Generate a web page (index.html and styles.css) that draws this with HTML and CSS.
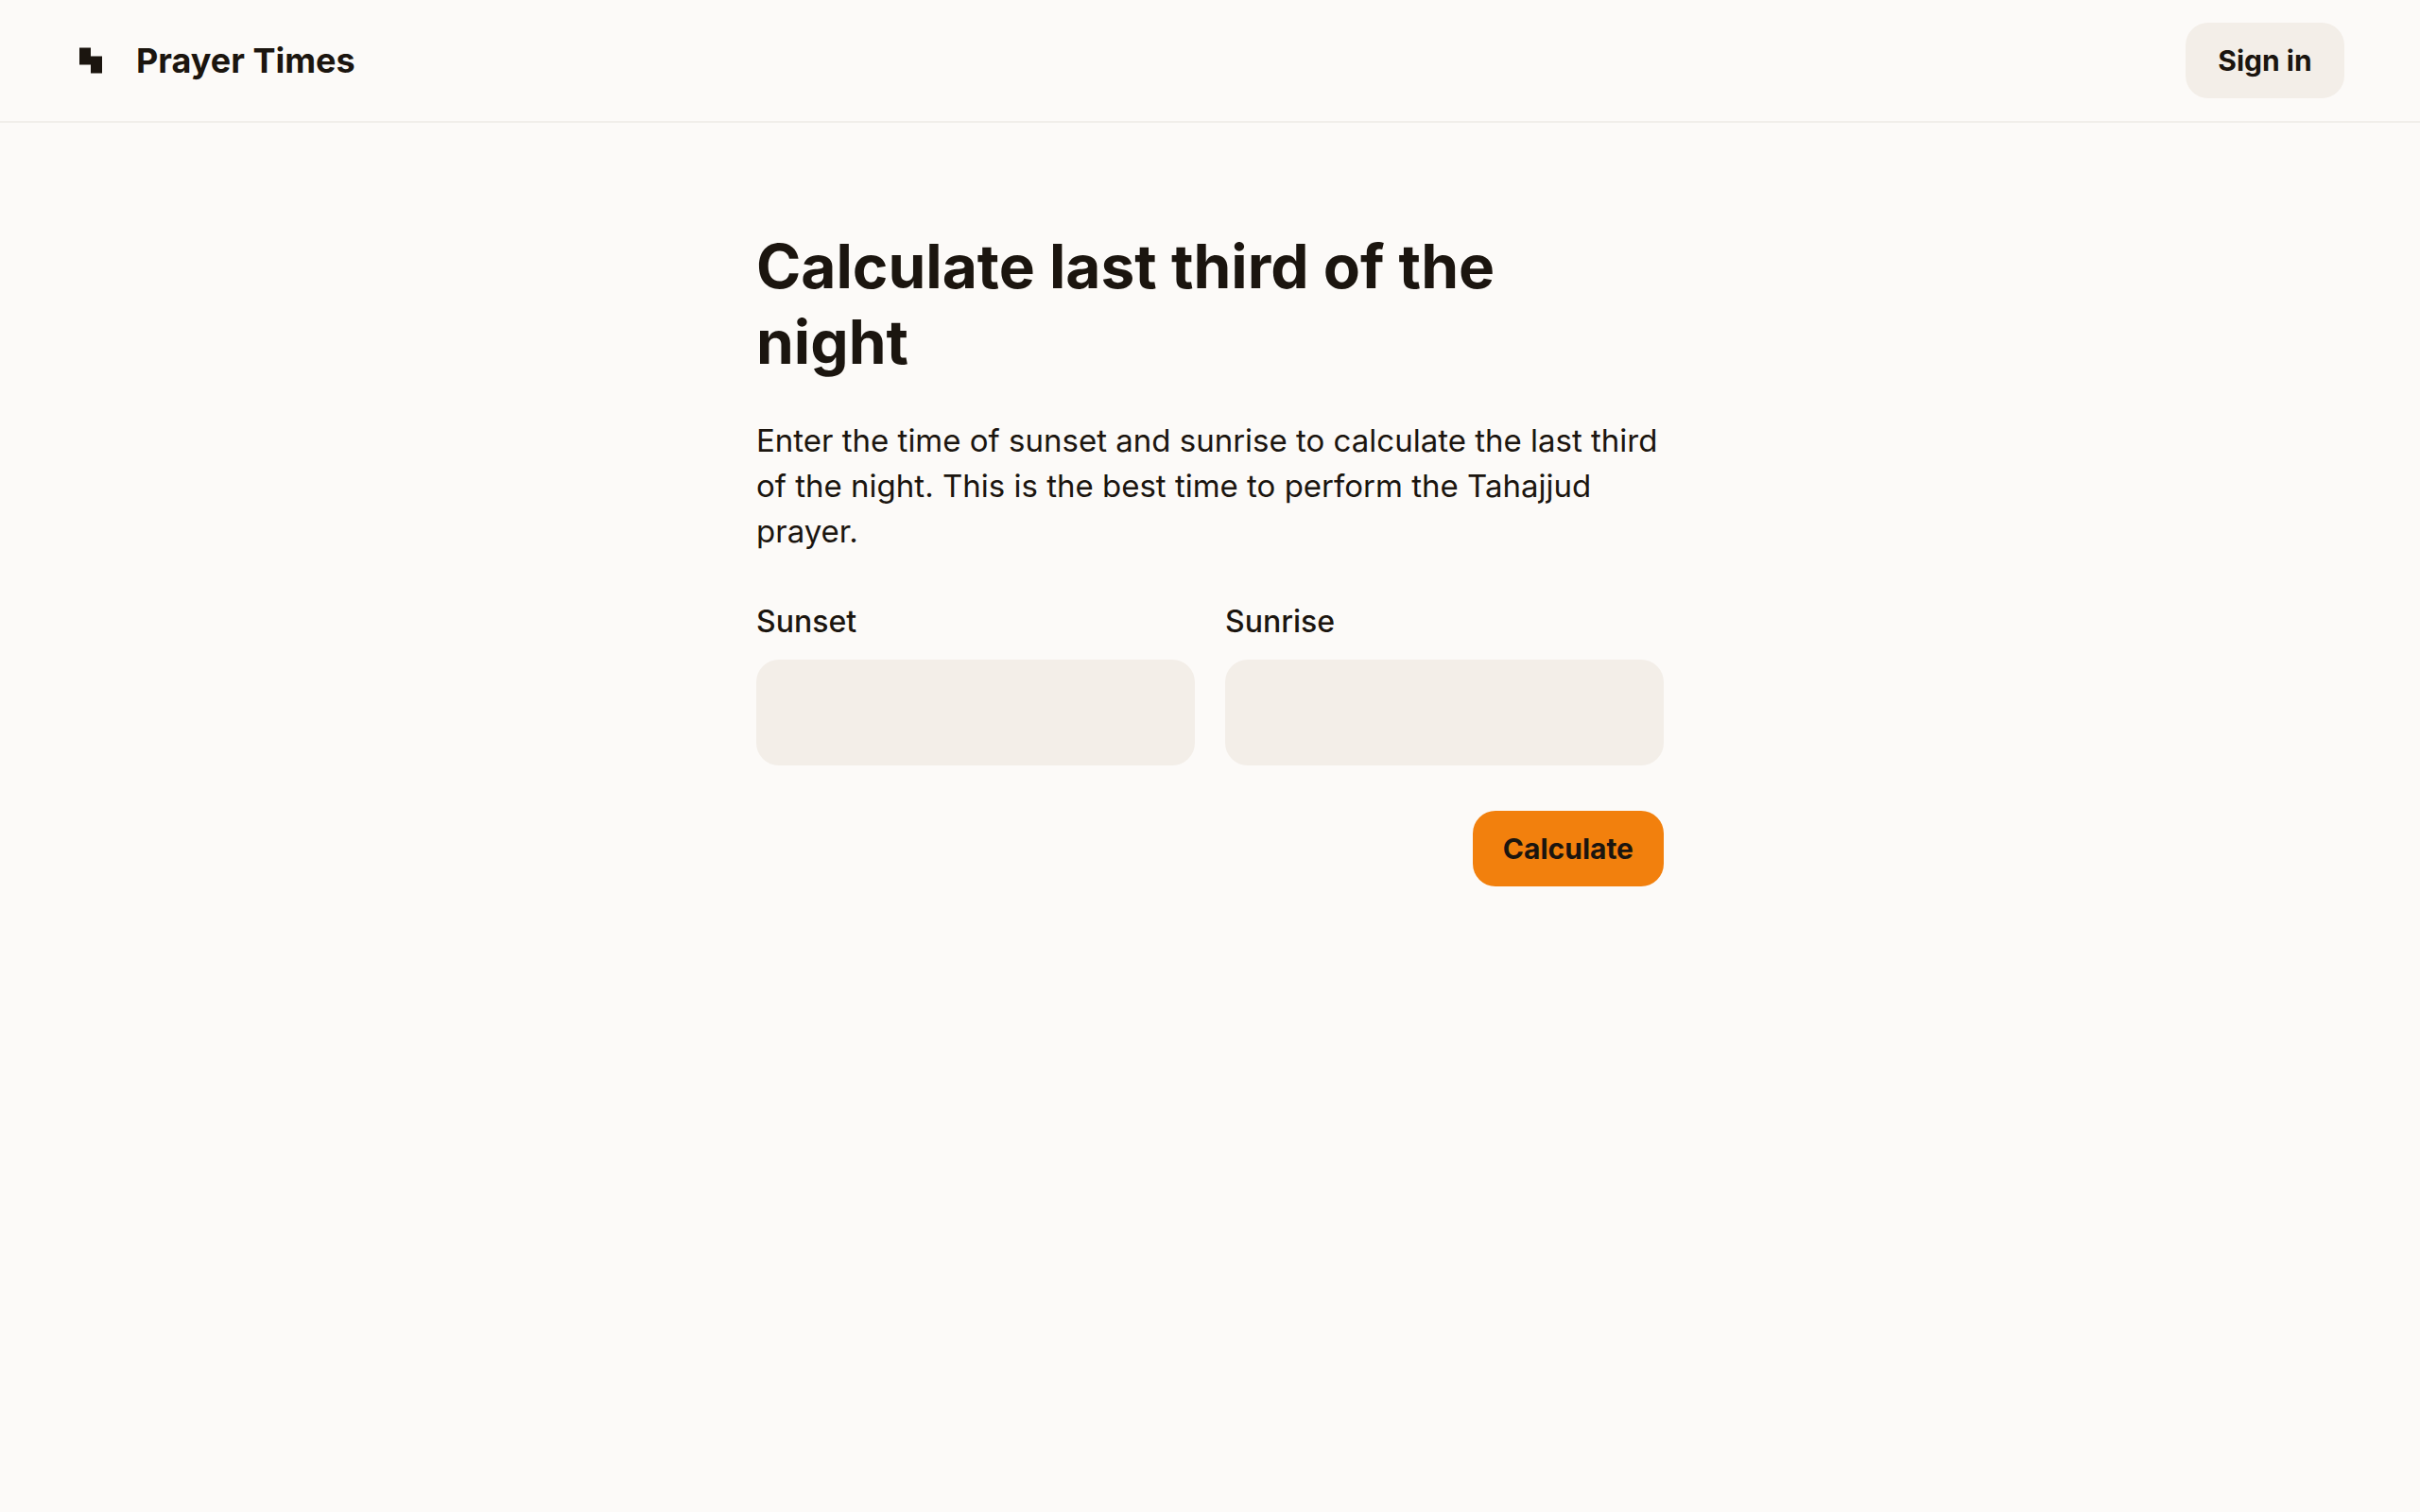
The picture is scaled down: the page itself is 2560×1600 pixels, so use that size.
FILE: index.html
```html
<!DOCTYPE html>
<html lang="en">
<head>
<meta charset="utf-8">
<meta name="viewport" content="width=device-width, initial-scale=1">
<title>Prayer Times</title>
<link rel="stylesheet" href="styles.css">
</head>
<body>
<header class="topbar">
  <a class="brand" href="#">
    <svg class="brand-mark" viewBox="0 0 24 28" aria-hidden="true"><path d="M0 .5h12v9h12v18H12v-9H0z"/></svg>
    <span>Prayer Times</span>
  </a>
  <button class="button" type="button">Sign in</button>
</header>
<main class="content">
  <h1 class="title">Calculate last third of the night</h1>
  <p class="intro">Enter the time of sunset and sunrise to calculate the last third of the night. This is the best time to perform the Tahajjud prayer.</p>
  <form class="form">
    <div class="fields">
      <div class="field">
        <label for="sunset">Sunset</label>
        <input id="sunset" type="text">
      </div>
      <div class="field">
        <label for="sunrise">Sunrise</label>
        <input id="sunrise" type="text">
      </div>
    </div>
    <button class="button button-primary" type="submit">Calculate</button>
  </form>
</main>
</body>
</html>
```
FILE: styles.css
```css
*, *::before, *::after {
  box-sizing: border-box;
}

body {
  margin: 0;
  background: #fcfaf8;
  color: #1b150f;
  font-family: Inter, "Open Sans", sans-serif;
  font-size: 32px;
  line-height: 48px;
}

.topbar {
  display: flex;
  align-items: center;
  justify-content: space-between;
  padding: 24px 80px;
  border-bottom: 2px solid #f1eeea;
}

.brand {
  display: flex;
  align-items: center;
  gap: 36px;
  padding-left: 4px;
  color: inherit;
  font-size: 36px;
  font-weight: 700;
  text-decoration: none;
}

.brand-mark {
  width: 24px;
  height: 28px;
  fill: currentColor;
}

.button {
  min-width: 168px;
  padding: 16px 32px;
  border: 0;
  border-radius: 24px;
  background: #f3eee8;
  color: inherit;
  font: inherit;
  font-size: 30px;
  font-weight: 700;
  cursor: pointer;
}

.button-primary {
  background: #f2800d;
}

.content {
  max-width: 1024px;
  margin: 0 auto;
  padding: 112px 32px;
}

.title {
  max-width: 880px;
  margin: 0 0 40px;
  font-size: 64px;
  font-weight: 700;
  line-height: 80px;
}

.intro {
  margin: 0 0 48px;
  font-size: 33px;
}

.form {
  display: flex;
  flex-direction: column;
  align-items: flex-end;
  gap: 48px;
}

.fields {
  display: grid;
  grid-template-columns: 1fr 1fr;
  gap: 32px;
  width: 100%;
}

.field {
  display: flex;
  flex-direction: column;
  gap: 16px;
}

.field label {
  font-weight: 500;
}

.field input {
  width: 100%;
  height: 112px;
  padding: 0 32px;
  border: 0;
  border-radius: 24px;
  background: #f3eee8;
  color: inherit;
  font: inherit;
}
```
